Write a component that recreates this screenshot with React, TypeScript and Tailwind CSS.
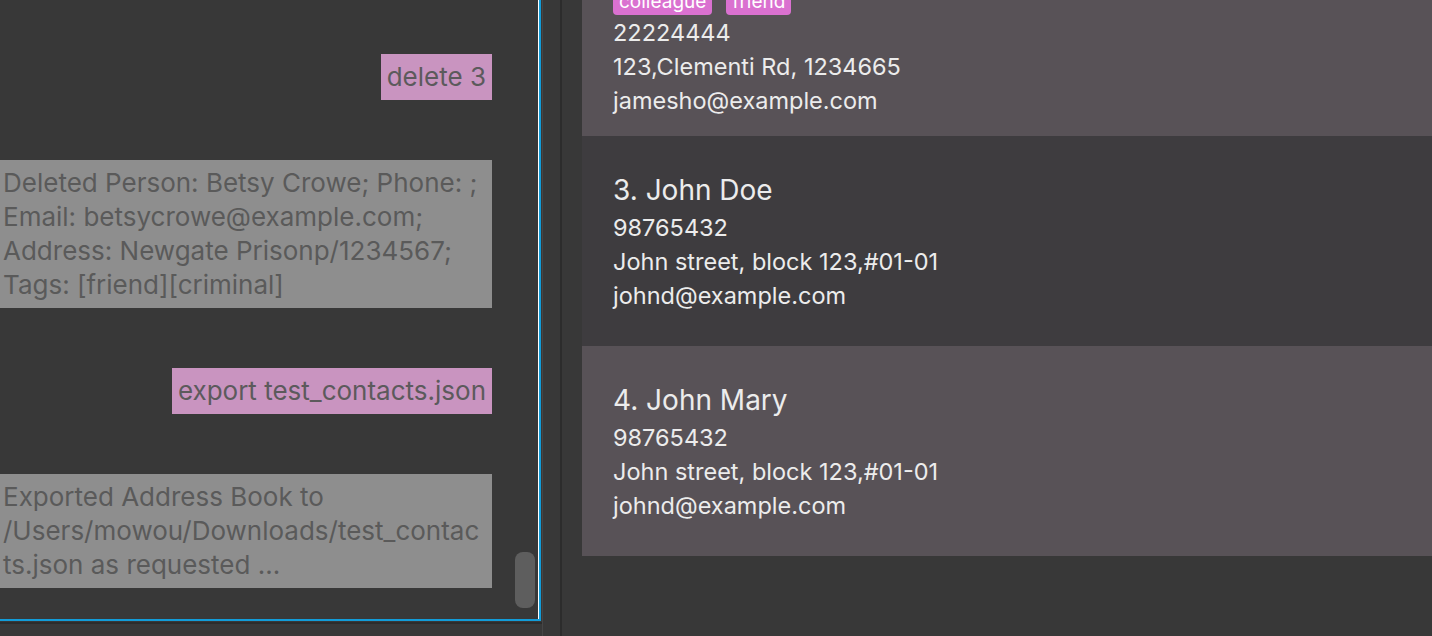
import React from "react";

const font = { fontFamily: "Inter, 'Noto Sans', sans-serif" };

function Card({ idx, name, phone, address, email, bg }: { idx: number; name: string; phone: string; address: string; email: string; bg: string }) {
  return (
    <div className={`${bg} h-[210px] shrink-0 pl-[31px] pt-[35px]`}>
      <div className="text-[28px] leading-[38px] text-[#ececec]">{idx}. {name}</div>
      <div className="mt-[2px] text-[23.5px] leading-[34px] text-[#ececec]">
        <div>{phone}</div>
        <div>{address}</div>
        <div>{email}</div>
      </div>
    </div>
  );
}

export default function App() {
  return (
    <div className="w-[1432px] h-[636px] bg-[#383838] flex overflow-hidden" style={font}>
      {/* Left: result display */}
      <div className="w-[542px] shrink-0 flex flex-col">
        <div className="h-[621px] w-[541px] shrink-0 flex border-r-2 border-b-2 border-[#129cd8]">
          <div className="flex-1 flex border-r border-white">
            <div className="w-[492px] shrink-0 flex flex-col gap-[60px] pt-[54px] text-[26px] leading-[34px]">
              <div className="self-end bg-[#c994c0] text-[#5c5a5c] px-[6px] py-[6px]">delete 3</div>
              <div className="bg-[#8e8e8e] text-[#5a5a5a] pl-[3px] py-[6px]">
                <div>Deleted Person: Betsy Crowe; Phone: ;</div>
                <div>Email: betsycrowe@example.com;</div>
                <div>Address: Newgate Prisonp/1234567;</div>
                <div>Tags: [friend][criminal]</div>
              </div>
              <div className="self-end bg-[#c994c0] text-[#5c5a5c] px-[6px] py-[6px]">export test_contacts.json</div>
              <div className="bg-[#8e8e8e] text-[#5a5a5a] pl-[3px] py-[6px]">
                <div>Exported Address Book to</div>
                <div>/Users/mowou/Downloads/test_contac</div>
                <div>ts.json as requested ...</div>
              </div>
            </div>
            <div className="flex-1 flex flex-col justify-end items-end pb-[11px] pr-[3px]">
              <div className="w-[20px] h-[56px] rounded-[8px] bg-[#5e5e5e]"></div>
            </div>
          </div>
        </div>
        <div className="h-[2px] shrink-0 bg-[#2c2c2c] mt-px"></div>
        <div className="flex-1"></div>
      </div>
      {/* Divider area */}
      <div className="w-[40px] shrink-0 flex">
        <div className="w-px bg-[#464646]"></div>
        <div className="w-[17px]"></div>
        <div className="w-[2px] bg-[#2c2c2c]"></div>
        <div className="flex-1"></div>
      </div>
      {/* Right: person list */}
      <div className="flex-1 flex flex-col">
        <div className="bg-[#585257] shrink-0 -mt-[12px] pl-[31px] pb-[18px] text-[#ececec]">
          <div className="h-[28px] flex items-center gap-[14px]">
            <div className="h-[26px] px-[6px] rounded-[4px] bg-[#da71d0] text-white text-[19px] leading-[26px]">colleague</div>
            <div className="h-[26px] px-[6px] rounded-[4px] bg-[#da71d0] text-white text-[19px] leading-[26px]">friend</div>
          </div>
          <div className="text-[23.5px] leading-[34px]">
            <div>22224444</div>
            <div>123,Clementi Rd, 1234665</div>
            <div>jamesho@example.com</div>
          </div>
        </div>
        <Card idx={3} name="John Doe" phone="98765432" address="John street, block 123,#01-01" email="johnd@example.com" bg="bg-[#3e3c3f]" />
        <Card idx={4} name="John Mary" phone="98765432" address="John street, block 123,#01-01" email="johnd@example.com" bg="bg-[#585257]" />
      </div>
    </div>
  );
}
